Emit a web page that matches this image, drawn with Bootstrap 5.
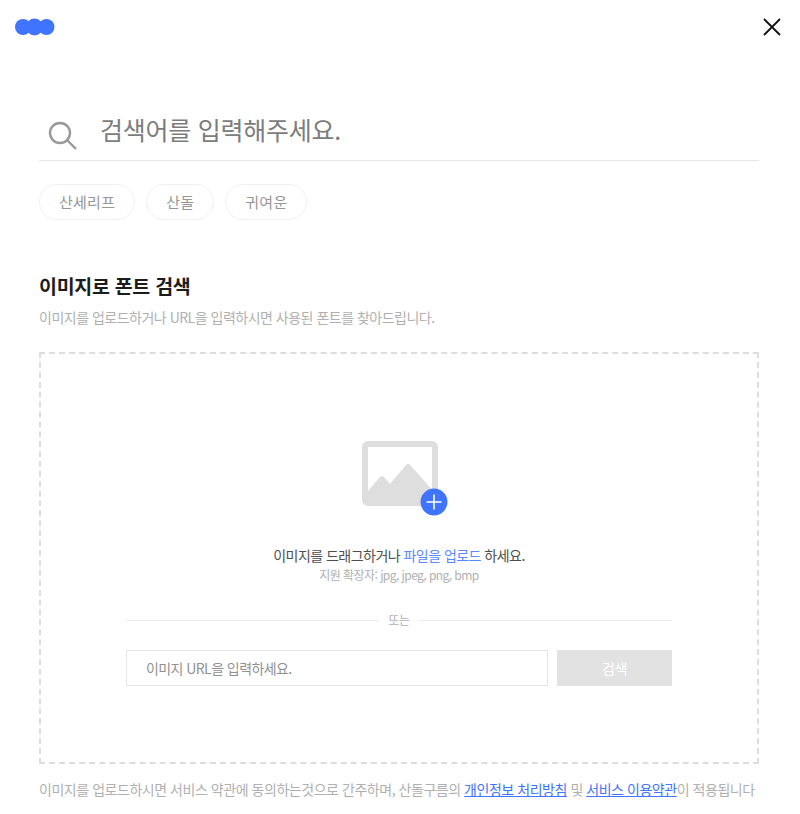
<!doctype html>
<html lang="ko"><head><meta charset="utf-8"><title>이미지로 폰트 검색</title>
<link href="https://cdn.jsdelivr.net/npm/bootstrap@5.3.0/dist/css/bootstrap.min.css" rel="stylesheet">
<style>
html,body{height:814px;overflow:hidden}
body{font-family:"Noto Sans CJK KR","Noto Sans",sans-serif;background:#fff;color:#222;letter-spacing:-.3px}
.topbar{height:54px;padding:18px 19px 0 15px}
.page-wrap{padding:0 41px 0 39px}
.search-row{height:55px;margin-top:52px;border-bottom:1px solid #e6e6e6}
.search-ph{font-size:25px;line-height:36px;color:#7c7c7c;margin:5px 0 0 22px;letter-spacing:-.25px}
.search-ico{margin-left:9px;margin-top:15px}
.chips{margin-top:23px;gap:11px}
.chip{height:36px;border:1px solid #f0f0f0;border-radius:18px;font-size:15px;color:#969696;padding:0 19px;display:flex;align-items:center;letter-spacing:.25px}
.sec-title{font-size:19.5px;font-weight:700;line-height:28px;margin:52px 0 0;color:#1c1c1c;letter-spacing:-.3px}
.sec-sub{font-size:14px;line-height:20px;color:#b0b0b0;margin:7px 0 0;letter-spacing:-.5px}
.drop{height:412px;margin-top:25px;border:2px dashed #ddd;padding-top:87px}
.drop-img{margin-left:12px}
.drop-msg{font-size:14px;line-height:20px;color:#4e4e4e;margin-top:29px;letter-spacing:-.53px}
.drop-msg span{color:#5a88ff}
.drop-ext{font-size:12px;line-height:18px;color:#b0b0b0;margin-top:1px;letter-spacing:-.56px}
.drop-inner{width:546px;margin-top:27px}
.or-row{gap:9px;font-size:12px;line-height:18px;color:#b0b0b0}
.or-row i{flex:1;height:1px;background:#ececec;display:block}
.url-row{margin-top:21px;gap:9px}
.url-input{width:422px;height:36px;border:1px solid #e6e6e6;font-size:14px;color:#919191;padding-left:19px;display:flex;align-items:center;letter-spacing:-.57px}
.url-btn{flex:1;height:36px;background:#e2e2e2;color:#fff;font-size:14px;display:flex;align-items:center;justify-content:center}
.foot{font-size:14px;line-height:20px;color:#b0b0b0;margin-top:15px;white-space:nowrap;letter-spacing:-.46px}
.foot a{color:#3f74ff}
</style></head>
<body>
<div class="topbar d-flex justify-content-between align-items-start">
<svg width="40" height="18" viewBox="0 0 40 18"><circle cx="8" cy="9" r="8" fill="#3f74ff"/><circle cx="19.500" cy="9" r="8.500" fill="#3f74ff"/><circle cx="31.500" cy="9" r="8" fill="#3f74ff"/></svg>
<svg width="18" height="18" viewBox="0 0 18 18"><path d="M1 1 17 17M17 1 1 17" stroke="#111" stroke-width="1.800" fill="none"/></svg>
</div>
<div class="page-wrap">
<div class="search-row d-flex align-items-start">
<svg class="search-ico" width="30" height="30" viewBox="0 0 30 30"><circle cx="12" cy="12" r="10" stroke="#999" stroke-width="2.400" fill="none"/><path d="M19.500 19.500 28 28" stroke="#999" stroke-width="2.400" fill="none"/></svg>
<div class="search-ph">검색어를 입력해주세요.</div>
</div>
<div class="chips d-flex"><div class="chip">산세리프</div><div class="chip">산돌</div><div class="chip">귀여운</div></div>
<h2 class="sec-title">이미지로 폰트 검색</h2>
<p class="sec-sub">이미지를 업로드하거나 URL을 입력하시면 사용된 폰트를 찾아드립니다.</p>
<div class="drop d-flex flex-column align-items-center">
<svg class="drop-img" width="86" height="75" viewBox="0 0 86 75">
<rect x="3" y="3" width="70" height="59" rx="3" fill="#fff" stroke="#dedede" stroke-width="6"/>
<path d="M6 50 18 36q2-2 4 0l6 7 16-19q2-2 4 0l25 28v12H6z" fill="#dedede"/>
<circle cx="72" cy="61" r="13.500" fill="#3f74ff"/>
<path d="M72 53.500v15M64.500 61h15" stroke="#fff" stroke-width="1.600" fill="none"/>
</svg>
<div class="drop-msg text-center">이미지를 드래그하거나 <span>파일을 업로드</span> 하세요.</div>
<div class="drop-ext text-center">지원 확장자: jpg, jpeg, png, bmp</div>
<div class="drop-inner">
<div class="or-row d-flex align-items-center"><i></i><div>또는</div><i></i></div>
<div class="url-row d-flex"><div class="url-input">이미지 URL을 입력하세요.</div><div class="url-btn">검색</div></div>
</div>
</div>
<div class="foot">이미지를 업로드하시면 서비스 약관에 동의하는것으로 간주하며, 산돌구름의 <a href="#">개인정보 처리방침</a> 및 <a href="#">서비스 이용약관</a>이 적용됩니다</div>
</div>
<script src="https://cdn.jsdelivr.net/npm/bootstrap@5.3.0/dist/js/bootstrap.bundle.min.js"></script>
</body></html>
